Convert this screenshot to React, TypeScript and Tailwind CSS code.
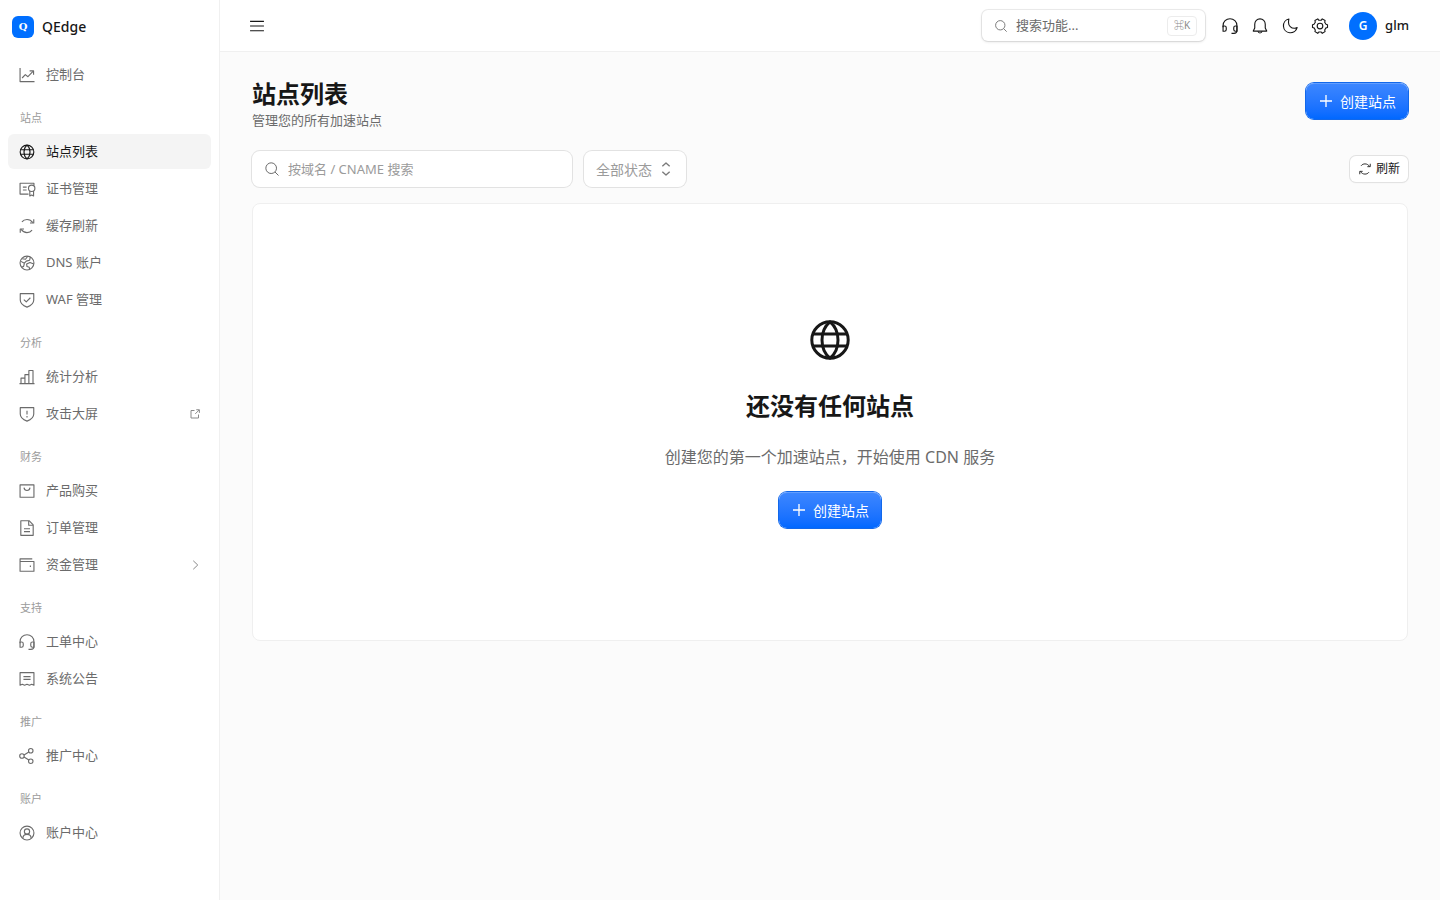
import type { ReactNode } from 'react';

type IconName =
  | 'trend'
  | 'globe'
  | 'certificate'
  | 'refresh'
  | 'earth'
  | 'shieldCheck'
  | 'bars'
  | 'shieldAlert'
  | 'bag'
  | 'file'
  | 'wallet'
  | 'headset'
  | 'receipt'
  | 'share'
  | 'user'
  | 'search'
  | 'menu'
  | 'bell'
  | 'moon'
  | 'gear'
  | 'plus'
  | 'external'
  | 'chevronRight'
  | 'upDown';

const icons: Record<IconName, ReactNode> = {
  trend: (
    <>
      <path d="M2.75 2.5v18.25H22" />
      <path d="M5.5 16l4.25-4.5 3.5 2.75L20 7.25" />
      <path d="M15.5 6.5h5.25v5.25" />
    </>
  ),
  globe: (
    <>
      <circle cx="12" cy="12" r="9.1" />
      <path d="M3.25 9h17.5M3.25 15h17.5" />
      <path d="M12 2.9C9.4 5 8 8.400 8 12s1.400 7 4 9.100c2.600-2.100 4-5.500 4-9.100S14.600 5 12 2.900z" />
    </>
  ),
  certificate: (
    <>
      <path d="M14 18.750H2.750V4.250h18.500v3" />
      <path d="M6.500 9.500h5M6.500 13.250h5" />
      <circle cx="18.250" cy="11" r="4.250" />
      <path d="M15.750 14.750v6.500l2.500-1.250 2.500 1.250v-6.500" />
    </>
  ),
  refresh: (
    <>
      <path d="M5.250 6.500C7 4.200 9.400 3.250 12 3.250c3.300 0 6 1.600 7.750 4.250" />
      <path d="M21 3v5h-5" />
      <path d="M18.750 17.500C17 19.800 14.600 20.750 12 20.750c-3.300 0-6-1.600-7.750-4.250" />
      <path d="M3 21v-5h5" />
    </>
  ),
  earth: (
    <>
      <circle cx="12" cy="12" r="9.25" />
      <path d="M3.250 9.500l5.250 2.750L11 9.500l4.500-1.250 1-4.500" />
      <path d="M5.500 6.250L10 7l3-4" />
      <path d="M21 13.250l-5-2-4.500 2 .5 3.500 3 1 .5 3" />
      <path d="M8.500 12.500l-1 4-2.500 1.250" />
    </>
  ),
  shieldCheck: (
    <>
      <path d="M3 3.500h18V12c0 4.500-3.500 7.500-9 9.500-5.500-2-9-5-9-9.500z" />
      <path d="M7.750 11.500l3.250 3 5.500-5.500" />
    </>
  ),
  bars: (
    <path d="M2 20.750h20M4 20.500v-7h5.250v7M9.250 20.500V8.750h5.250V20.500M14.500 20.500V3.250h5.500V20.500" />
  ),
  shieldAlert: (
    <>
      <path d="M3 3.500h18V12c0 4.500-3.500 7.500-9 9.500-5.500-2-9-5-9-9.500z" />
      <path d="M12 7.500v5.250M12 14.500v2" />
    </>
  ),
  bag: (
    <>
      <rect x="2.750" y="3.750" width="18.500" height="16.500" />
      <path d="M8 7.500c.3 2.300 1.900 3.750 4 3.750s3.700-1.450 4-3.750" />
    </>
  ),
  file: (
    <>
      <path d="M3.750 2.250h11l5.500 5.500v14H3.750z" />
      <path d="M14.250 2.500V8.250H20M8 13h8M8 16.750h8" />
    </>
  ),
  wallet: (
    <>
      <path d="M19 3.750H2.750v16.500h18.500V7.250H2.750" />
      <path d="M16.500 12.750v2" />
    </>
  ),
  headset: (
    <>
      <path d="M2.750 13.500V11.500a9.250 9.250 0 0 1 18.500 0V18c0 2.500-1.500 3.750-4 3.750H14" />
      <path d="M2.750 12h2c1.400 0 2.250.9 2.250 2.250v2.500C7 18.100 6.150 19 4.750 19h-2z" />
      <path d="M21.250 12h-2c-1.400 0-2.250.9-2.250 2.250v2.500c0 1.350.85 2.250 2.250 2.250h2z" />
    </>
  ),
  receipt: (
    <>
      <path d="M2.750 3.500h18.500v16.750L18.250 19l-3 1.250L12 19l-3.250 1.250-3-1.250-3 1.250z" />
      <path d="M7.250 8.750h9.500M7.250 12.500h9.500" />
    </>
  ),
  share: (
    <>
      <circle cx="5.250" cy="12" r="3" />
      <circle cx="17" cy="5" r="3" />
      <circle cx="17" cy="19" r="3" />
      <path d="M8 10.750l6.500-4M8 13.250l6.500 4" />
    </>
  ),
  user: (
    <>
      <circle cx="12" cy="12" r="9.25" />
      <circle cx="12" cy="10" r="3.500" />
      <path d="M6.500 19c0-3 2.250-5.250 5.500-5.250s5.500 2.250 5.500 5.250" />
    </>
  ),
  search: (
    <>
      <circle cx="10.750" cy="10.750" r="8" />
      <path d="M16.500 16.500l5.250 5.250" />
    </>
  ),
  menu: <path d="M2.750 5.750h18.500M2.750 12h18.500M2.750 18.250h18.500" />,
  bell: (
    <>
      <path d="M5 9.500a7 7 0 0 1 14 0v5.250l2 4H3l2-4z" />
      <path d="M9.250 19c.3 1.500 1.400 2.250 2.750 2.250s2.450-.75 2.750-2.250" />
    </>
  ),
  moon: (
    <path d="M10.500 2.750a9.250 9.250 0 1 0 11 11.250c-1.100.7-2.400 1-3.750 1-4.250 0-7.750-3.400-7.750-7.750 0-1.650.2-3.300.5-4.500z" />
  ),
  gear: (
    <>
      <circle cx="12" cy="12" r="3.750" />
      <path d="M9 2.500l1.250 1.750h3.500L15 2.500l3.750 2.250-.5 2.250 1.750 2.750 2 .5v3.750l-2 .5-1.750 2.750.5 2.250L15 21.750l-1.250-1.750h-3.500L9 21.750l-3.750-2.250.5-2.250L4 14.500l-2-.5v-3.750l2-.5L5.750 7l-.5-2.250z" />
    </>
  ),
  plus: <path d="M12 3v18M3 12h18" />,
  external: (
    <>
      <path d="M11 5H4v15h15v-7" />
      <path d="M14.500 3.500h6.250V9.750M20.500 3.750L12.500 11.750" />
    </>
  ),
  chevronRight: <path d="M8.500 3.500L17.500 12l-9 8.500" />,
  upDown: <path d="M6.500 8L12 3 17.500 8M6.500 16l5.500 5L17.500 16" />,
};

function Icon({ name, className, strokeWidth = 1.5 }: { name: IconName; className: string; strokeWidth?: number }) {
  return (
    <svg
      viewBox="0 0 24 24"
      fill="none"
      stroke="currentColor"
      strokeWidth={strokeWidth}
      strokeLinejoin="round"
      className={`shrink-0 ${className}`}
      aria-hidden="true"
    >
      {icons[name]}
    </svg>
  );
}

interface NavEntry {
  label: string;
  icon: IconName;
  active?: boolean;
  trailing?: IconName;
}

interface NavGroup {
  title?: string;
  items: NavEntry[];
}

const navGroups: NavGroup[] = [
  { items: [{ label: '控制台', icon: 'trend' }] },
  {
    title: '站点',
    items: [
      { label: '站点列表', icon: 'globe', active: true },
      { label: '证书管理', icon: 'certificate' },
      { label: '缓存刷新', icon: 'refresh' },
      { label: 'DNS 账户', icon: 'earth' },
      { label: 'WAF 管理', icon: 'shieldCheck' },
    ],
  },
  {
    title: '分析',
    items: [
      { label: '统计分析', icon: 'bars' },
      { label: '攻击大屏', icon: 'shieldAlert', trailing: 'external' },
    ],
  },
  {
    title: '财务',
    items: [
      { label: '产品购买', icon: 'bag' },
      { label: '订单管理', icon: 'file' },
      { label: '资金管理', icon: 'wallet', trailing: 'chevronRight' },
    ],
  },
  {
    title: '支持',
    items: [
      { label: '工单中心', icon: 'headset' },
      { label: '系统公告', icon: 'receipt' },
    ],
  },
  { title: '推广', items: [{ label: '推广中心', icon: 'share' }] },
  { title: '账户', items: [{ label: '账户中心', icon: 'user' }] },
];

const headerActions: { label: string; icon: IconName }[] = [
  { label: '工单', icon: 'headset' },
  { label: '通知', icon: 'bell' },
  { label: '深色模式', icon: 'moon' },
  { label: '设置', icon: 'gear' },
];

function Sidebar() {
  return (
    <aside className="w-[220px] shrink-0 border-r border-[#f0f0f0] bg-white pb-8">
      <a href="#" className="flex h-[53px] items-center gap-2 px-3 text-[14px] font-medium text-[#171717]">
        <span className="flex size-[22px] items-center justify-center rounded-md bg-[#006fff] font-['DejaVu_Serif',serif] text-[10px] font-bold text-white">
          Q
        </span>
        QEdge
      </a>
      <nav className="px-2 pt-1">
        {navGroups.map((group, i) => (
          <div key={i} className="mb-[18px]">
            {group.title && <h2 className="mb-2 px-3 text-[11px] leading-4 text-[#9b9b9b]">{group.title}</h2>}
            <ul className="flex flex-col gap-[2px]">
              {group.items.map((item) => (
                <li key={item.label}>
                  <a
                    href="#"
                    className={`flex h-[35px] items-center gap-[10px] rounded-md px-[10px] text-[13px] ${
                      item.active ? 'bg-[#f4f4f4] text-[#171717]' : 'text-[#6b6b6b] hover:bg-[#f7f7f7]'
                    }`}
                  >
                    <Icon name={item.icon} className="size-[18px]" />
                    <span className="flex-1">{item.label}</span>
                    {item.trailing && <Icon name={item.trailing} strokeWidth={2} className="size-3 text-[#8a8a8a]" />}
                  </a>
                </li>
              ))}
            </ul>
          </div>
        ))}
      </nav>
    </aside>
  );
}

function TopBar() {
  return (
    <header className="flex h-[52px] items-center border-b border-[#f0f0f0] bg-white pr-[31px] pl-[22px] text-[#171717]">
      <button type="button" aria-label="菜单" className="flex size-[30px] items-center justify-center">
        <Icon name="menu" className="size-[18px]" />
      </button>
      <button
        type="button"
        className="mr-[10px] ml-auto flex h-[31px] w-[223px] items-center gap-2 rounded-md bg-white pr-2 pl-3 text-[13px] text-[#6b6b6b] shadow-[0_0_0_1px_rgba(0,0,0,0.07),0_1px_3px_rgba(0,0,0,0.12)]"
      >
        <Icon name="search" className="size-[14px]" />
        <span>搜索功能...</span>
        <kbd className="ml-auto flex h-5 items-center rounded border border-[#ececec] px-[6px] font-['Noto_Sans','Noto_Sans_CJK_SC',sans-serif] text-[10px] text-[#8a8a8a]">
          ⌘K
        </kbd>
      </button>
      {headerActions.map((action) => (
        <button
          key={action.icon}
          type="button"
          aria-label={action.label}
          className="flex size-[30px] items-center justify-center"
        >
          <Icon name={action.icon} className="size-[18px]" />
        </button>
      ))}
      <button type="button" className="ml-[14px] flex items-center gap-2 text-[13px] font-medium">
        <span className="flex size-7 items-center justify-center rounded-full bg-[#006fff] text-[12px] font-semibold text-white">
          G
        </span>
        glm
      </button>
    </header>
  );
}

function CreateButton() {
  return (
    <button
      type="button"
      className="flex h-9 items-center gap-[6px] rounded-lg bg-linear-to-b from-[#3d87ff] to-[#0068ff] px-3 text-[14px] whitespace-nowrap text-white shadow-[0_0_0_1px_#1268ea,inset_0_1px_0_rgba(255,255,255,0.2)]"
    >
      <Icon name="plus" strokeWidth={2} className="size-4" />
      创建站点
    </button>
  );
}

export default function App() {
  return (
    <div className="flex min-h-screen bg-[#fbfbfb] font-['Noto_Sans','Noto_Sans_CJK_SC',sans-serif]">
      <Sidebar />
      <div className="min-w-0 flex-1">
        <TopBar />
        <main className="px-8 pt-[26px] pb-8">
          <div className="flex items-start justify-between">
            <div>
              <h1 className="text-[24px] leading-8 font-bold text-[#171717]">站点列表</h1>
              <p className="text-[13px] leading-5 text-[#6b6b6b]">管理您的所有加速站点</p>
            </div>
            <div className="pt-[5px]">
              <CreateButton />
            </div>
          </div>

          {/* Filters */}
          <div className="mt-[21px] flex items-center gap-3">
            <label className="flex h-9 w-[320px] items-center gap-2 rounded-lg bg-white px-3 shadow-[0_0_0_1px_#e2e2e2]">
              <Icon name="search" className="size-4 text-[#6b6b6b]" />
              <input
                type="text"
                aria-label="搜索站点"
                placeholder="按域名 / CNAME 搜索"
                className="min-w-0 flex-1 bg-transparent pt-[2px] text-[13px] text-[#171717] outline-none placeholder:text-[#9b9b9b]"
              />
            </label>
            <div className="relative">
              <select
                aria-label="状态"
                className="h-9 w-[102px] appearance-none rounded-lg bg-white pl-3 text-[14px] text-[#9b9b9b] shadow-[0_0_0_1px_#e2e2e2] outline-none"
              >
                <option>全部状态</option>
              </select>
              <Icon
                name="upDown"
                strokeWidth={2}
                className="pointer-events-none absolute top-[10px] right-3 size-4 text-[#7a7a7a]"
              />
            </div>
            <button
              type="button"
              className="ml-auto flex h-[26px] items-center gap-1 rounded-md bg-white px-2 text-[12px] text-[#171717] shadow-[0_0_0_1px_#e2e2e2,0_1px_2px_rgba(0,0,0,0.06)]"
            >
              <Icon name="refresh" className="size-[14px]" />
              刷新
            </button>
          </div>

          {/* Empty state */}
          <section className="mt-4 flex flex-col items-center rounded-lg border border-[#efefef] bg-white py-28">
            <Icon name="globe" className="size-12 text-[#171717]" />
            <h2 className="mt-6 text-[24px] leading-9 font-bold text-[#171717]">还没有任何站点</h2>
            <p className="mt-5 mb-[22px] text-[16px] leading-[26px] text-[#6b6b6b]">
              创建您的第一个加速站点，开始使用 CDN 服务
            </p>
            <CreateButton />
          </section>
        </main>
      </div>
    </div>
  );
}
